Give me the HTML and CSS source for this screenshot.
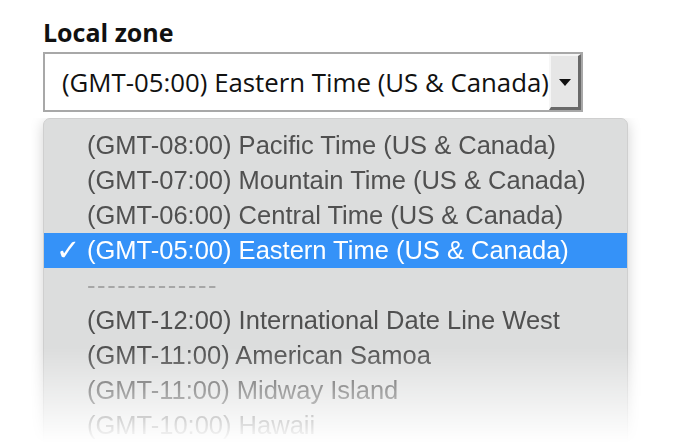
FILE: index.html
```html
<!DOCTYPE html>
<html lang="en">
<head>
    <meta charset="UTF-8">
    <meta name="viewport" content="width=device-width, initial-scale=1.0">
    <title>Local zone</title>
    <link rel="stylesheet" href="styles.css">
</head>
<body>
    <div class="field">
        <label class="field-label">Local zone</label>
        <div class="select">
            <span class="select-value">(GMT-05:00) Eastern Time (US &amp; Canada)</span>
            <span class="select-button"><span class="arrow"></span></span>
        </div>

        <div class="dropdown-fade">
            <ul class="dropdown">
                <li>(GMT-08:00) Pacific Time (US &amp; Canada)</li>
                <li>(GMT-07:00) Mountain Time (US &amp; Canada)</li>
                <li>(GMT-06:00) Central Time (US &amp; Canada)</li>
                <li class="selected"><span class="check">✓</span>(GMT-05:00) Eastern Time (US &amp; Canada)</li>
                <li class="divider">-------------</li>
                <li>(GMT-12:00) International Date Line West</li>
                <li>(GMT-11:00) American Samoa</li>
                <li>(GMT-11:00) Midway Island</li>
                <li>(GMT-10:00) Hawaii</li>
            </ul>
        </div>
    </div>
</body>
</html>
```

FILE: styles.css
```css
/* CSS Variables */
:root {
    --label-color: #111;
    --box-border: #a8a8a8;
    --menu-bg: #dcdddd;
    --menu-text: #505050;
    --highlight: #3592f8;
    --row-height: 35px;
}

/* Reset and base styles */
* {
    margin: 0;
    padding: 0;
    box-sizing: border-box;
}

html,
body {
    height: 445px;
    overflow: hidden;
}

body {
    font-family: "Open Sans", "Noto Sans", sans-serif;
    background: #fff;
}

.field {
    padding: 16px 0 0 43px;
    width: 700px;
    height: 445px;
}

.field-label {
    display: block;
    font-size: 25px;
    font-weight: bold;
    line-height: 32px;
    color: var(--label-color);
}

/* Closed select */
.select {
    display: flex;
    width: 540px;
    height: 60px;
    margin-top: 4px;
    border: 2px solid var(--box-border);
    background: #fff;
}

.select-value {
    flex: 1;
    overflow: hidden;
    white-space: nowrap;
    padding-left: 17px;
    font-size: 25.8px;
    line-height: 56px;
    color: #111;
}

.select-button {
    display: flex;
    align-items: center;
    justify-content: center;
    width: 32px;
    background: #e6e6e6;
    border-left: 2px solid #f6f6f6;
    border-top: 2px solid #f6f6f6;
    border-right: 3px solid #6a6a6a;
    border-bottom: 3px solid #6a6a6a;
}

.arrow {
    width: 0;
    height: 0;
    border-left: 6px solid transparent;
    border-right: 6px solid transparent;
    border-top: 7px solid #111;
    margin-top: 2px;
}

/* Open menu */
.dropdown-fade {
    margin-top: 6px;
    width: 610px;
    height: 335px;
    margin-left: -12px;
    padding: 0 12px;
    overflow: hidden;
    -webkit-mask-image: linear-gradient(to bottom, #000 230px, transparent 325px);
    mask-image: linear-gradient(to bottom, #000 230px, transparent 325px);
}

.dropdown {
    list-style: none;
    width: 585px;
    padding-top: 9px;
    padding-bottom: 20px;
    background: var(--menu-bg);
    border: 1px solid #cfcfcf;
    border-radius: 7px;
    box-shadow: 0 3px 14px rgba(0, 0, 0, 0.18);
    font-family: "Liberation Sans", Arial, sans-serif;
    font-size: 25.5px;
    color: var(--menu-text);
}

.dropdown li {
    position: relative;
    height: var(--row-height);
    line-height: var(--row-height);
    padding-left: 43px;
    white-space: nowrap;
}

.dropdown li.selected {
    background: var(--highlight);
    color: #fff;
}

.check {
    position: absolute;
    left: 12px;
    font-family: "DejaVu Sans", sans-serif;
    font-size: 29px;
    font-weight: bold;
}

.dropdown li.divider {
    color: #a6a6a6;
    letter-spacing: 1.6px;
}
```
